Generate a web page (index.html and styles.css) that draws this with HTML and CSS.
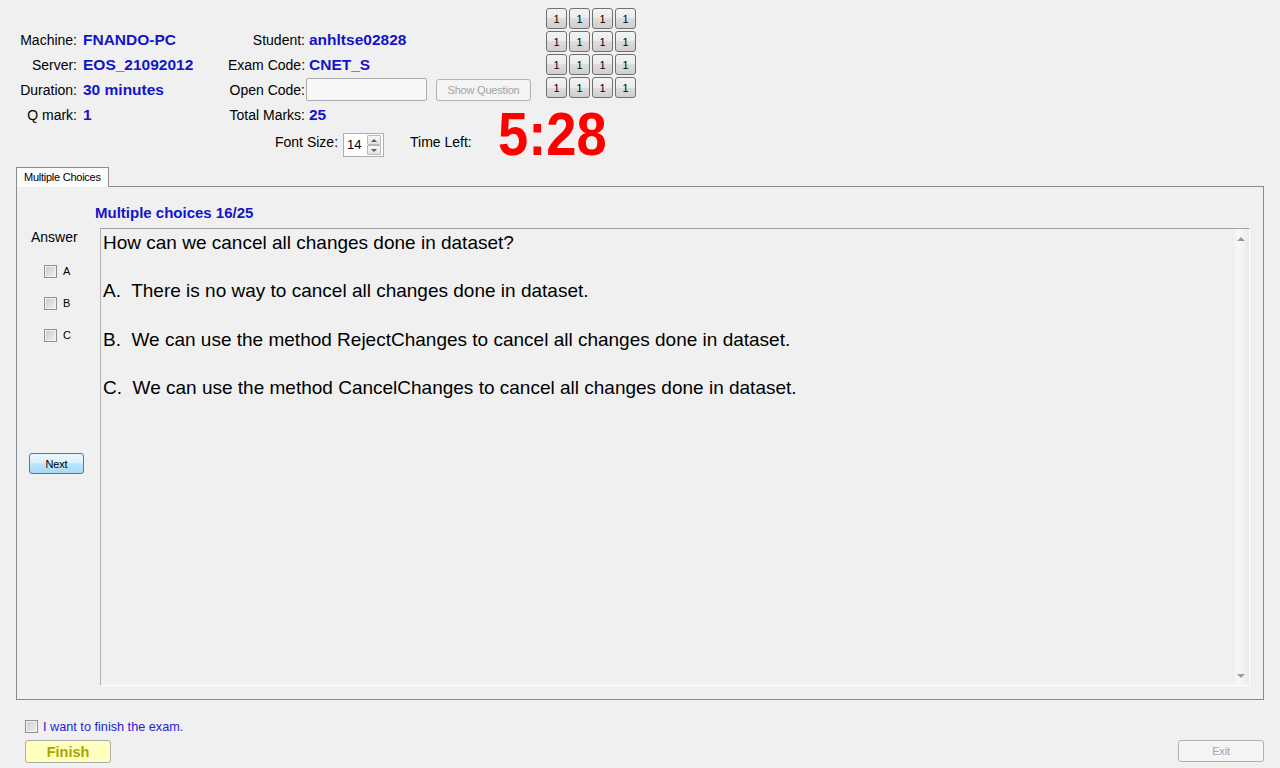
FILE: index.html
```html
<!DOCTYPE html>
<html>
<head>
<meta charset="utf-8">
<title>Exam</title>
<link rel="stylesheet" href="styles.css">
</head>
<body>
<div class="top">
  <div class="left">
    <div class="info">
      <span class="lbl">Machine:</span><span class="val">FNANDO-PC</span>
      <span class="lbl">Student:</span><span class="val v2">anhltse02828</span>
      <span class="lbl">Server:</span><span class="val">EOS_21092012</span>
      <span class="lbl">Exam Code:</span><span class="val v2">CNET_S</span>
      <span class="lbl">Duration:</span><span class="val">30 minutes</span>
      <span class="lbl">Open Code:</span>
      <span class="opencode"><span class="input"></span><span class="btn disabled showq">Show Question</span></span>
      <span class="lbl">Q mark:</span><span class="val">1</span>
      <span class="lbl">Total Marks:</span><span class="val v2">25</span>
    </div>
    <div class="fontrow">
      <span class="flbl">Font Size:</span>
      <span class="spin"><span class="num">14</span><span class="arrows"><span class="arr"><span class="tri-up"></span></span><span class="arr"><span class="tri-down"></span></span></span></span>
      <span class="tlbl">Time Left:</span>
      <span class="time">5:28</span>
    </div>
  </div>
  <div class="numgrid">
    <span class="nb">1</span><span class="nb">1</span><span class="nb">1</span><span class="nb">1</span>
    <span class="nb">1</span><span class="nb">1</span><span class="nb">1</span><span class="nb">1</span>
    <span class="nb">1</span><span class="nb">1</span><span class="nb">1</span><span class="nb">1</span>
    <span class="nb">1</span><span class="nb">1</span><span class="nb">1</span><span class="nb">1</span>
  </div>
</div>

<div class="tabs">
  <div class="tabhead">Multiple Choices</div>
  <div class="panel">
    <div class="ptitle">Multiple choices 16/25</div>
    <div class="pbody">
      <div class="answers">
        <div class="anslbl">Answer</div>
        <div class="opts">
          <div class="opt"><span class="cb"></span>A</div>
          <div class="opt"><span class="cb"></span>B</div>
          <div class="opt"><span class="cb"></span>C</div>
        </div>
        <div class="btn next">Next</div>
      </div>
      <div class="qbox">
        <div class="qtext">
          <p>How can we cancel all changes done in dataset?</p>
          <p>A.  There is no way to cancel all changes done in dataset.</p>
          <p>B.  We can use the method RejectChanges to cancel all changes done in dataset.</p>
          <p>C.  We can use the method CancelChanges to cancel all changes done in dataset.</p>
        </div>
        <div class="sbar"><span class="tri-up big"></span><span class="tri-down big"></span></div>
      </div>
    </div>
  </div>
</div>

<div class="footer">
  <div class="finishrow"><span class="cb"></span>I want to finish the exam.</div>
  <div class="btnrow">
    <div class="btn finish">Finish</div>
    <div class="btn disabled exit">Exit</div>
  </div>
</div>
</body>
</html>
```

FILE: styles.css
```css
body {
  margin: 0;
  width: 1280px;
  height: 768px;
  overflow: hidden;
  background: #f0f0f0;
  font-family: "Liberation Sans", Arial, sans-serif;
  color: #000;
}

.top {
  display: flex;
  height: 167px;
}

.left {
  width: 546px;
  flex: none;
}

.info {
  display: grid;
  grid-template-columns: 77px 151px 77px 1fr;
  grid-auto-rows: 25px;
  align-items: center;
  padding-top: 27px;
  font-size: 14px;
}

.lbl {
  text-align: right;
  white-space: nowrap;
}

.val {
  color: #1414c8;
  font-weight: bold;
  font-size: 15.5px;
  padding-left: 6px;
  white-space: nowrap;
}

.v2 {
  padding-left: 4px;
}

.opencode {
  display: flex;
  align-items: center;
}

.input {
  width: 121px;
  height: 23px;
  flex: none;
  box-sizing: border-box;
  margin-left: 1px;
  border: 1px solid #abadb3;
  border-radius: 2px;
  background: #f7f7f7;
}

.btn {
  box-sizing: border-box;
  display: flex;
  align-items: center;
  justify-content: center;
  flex: none;
  font-size: 11px;
  letter-spacing: -0.2px;
  border: 1px solid #707070;
  border-radius: 3px;
  white-space: nowrap;
}

.disabled {
  border-color: #adb2b5;
  background: #f4f4f4;
  color: #a3a3a3;
}

.showq {
  width: 95px;
  height: 22px;
  margin-left: 9px;
}

.fontrow {
  display: flex;
  align-items: flex-start;
  margin-top: 4px;
  padding-left: 275px;
  height: 24px;
  font-size: 14px;
}

.fontrow > * {
  flex: none;
}

.flbl,
.tlbl {
  line-height: 22px;
  white-space: nowrap;
}

.spin {
  width: 41px;
  height: 24px;
  box-sizing: border-box;
  margin: 2px 0 0 5px;
  border: 1px solid #abadb3;
  background: #fff;
  display: flex;
}

.spin .num {
  flex: 1;
  font-size: 13px;
  line-height: 22px;
  padding-left: 3px;
}

.arrows {
  width: 16px;
  display: flex;
  flex-direction: column;
  padding: 1px 2px 1px 0;
  box-sizing: border-box;
}

.arr {
  flex: 1;
  border: 1px solid #b8b8b8;
  border-radius: 1px;
  background: linear-gradient(#f7f7f7, #e2e2e2);
  display: flex;
  align-items: center;
  justify-content: center;
}

.tri-up {
  width: 0;
  height: 0;
  border-left: 3px solid transparent;
  border-right: 3px solid transparent;
  border-bottom: 3px solid #5a5a5a;
}

.tri-down {
  width: 0;
  height: 0;
  border-left: 3px solid transparent;
  border-right: 3px solid transparent;
  border-top: 3px solid #5a5a5a;
}

.tlbl {
  margin-left: 26px;
}

.time {
  margin: -8px 0 0 26px;
  font-size: 61px;
  font-weight: bold;
  line-height: 22px;
  color: #ff0000;
  transform: scaleX(0.89);
  transform-origin: left center;
}

.numgrid {
  display: grid;
  grid-template-columns: repeat(4, 21px);
  grid-auto-rows: 21px;
  gap: 2px;
  margin-top: 8px;
  align-self: flex-start;
}

.nb {
  box-sizing: border-box;
  border: 1px solid #707070;
  border-radius: 3px;
  background: linear-gradient(#f3f3f3 0%, #ebebeb 50%, #dddddd 50%, #cfcfcf 100%);
  font-size: 11px;
  display: flex;
  align-items: center;
  justify-content: center;
}

.tabs {
  margin: 0 16px;
}

.tabhead {
  position: relative;
  z-index: 1;
  width: 93px;
  height: 20px;
  margin-bottom: -1px;
  box-sizing: border-box;
  border: 1px solid #898c95;
  border-bottom: none;
  background: #fbfbfb;
  font-size: 11px;
  letter-spacing: -0.25px;
  line-height: 18px;
  padding-left: 7px;
  white-space: nowrap;
}

.panel {
  height: 514px;
  box-sizing: border-box;
  border: 1px solid #898c95;
  padding-top: 16px;
}

.ptitle {
  margin-left: 78px;
  font-size: 15px;
  font-weight: bold;
  color: #1414c8;
  line-height: 20px;
  height: 20px;
}

.pbody {
  display: flex;
  margin-top: 5px;
}

.answers {
  width: 83px;
  flex: none;
}

.anslbl {
  font-size: 14px;
  line-height: 18px;
  padding-left: 14px;
}

.opts {
  margin-top: 9px;
}

.opt {
  display: flex;
  align-items: center;
  height: 32px;
  padding-left: 27px;
  font-size: 11px;
}

.cb {
  width: 13px;
  height: 13px;
  flex: none;
  box-sizing: border-box;
  border: 1px solid #8e8f8f;
  background: linear-gradient(135deg, #cdcdcd, #efefef);
  box-shadow: inset 0 0 0 1px #f2f2f2;
}

.opt .cb {
  margin-right: 6px;
}

.next {
  width: 55px;
  height: 21px;
  margin: 102px 0 0 12px;
  border-color: #3c7fb1;
  background: linear-gradient(#eaf6fd 0%, #d9f0fc 50%, #bee6fd 50%, #a7d9f5 100%);
}

.qbox {
  width: 1150px;
  height: 458px;
  box-sizing: border-box;
  border-top: 1px solid #a0a0a0;
  border-left: 1px solid #b4b4b4;
  border-right: 1px solid #ffffff;
  border-bottom: 1px solid #ffffff;
  display: flex;
}

.qtext {
  flex: 1;
  padding: 2px 0 0 2px;
  font-size: 19px;
  line-height: 24.2px;
}

.qtext p {
  margin: 0 0 24.2px;
  white-space: pre;
}

.sbar {
  width: 17px;
  flex: none;
  display: flex;
  flex-direction: column;
  justify-content: space-between;
  align-items: center;
  padding: 8px 0 7px;
  box-sizing: border-box;
  background: linear-gradient(to right, #ededed, #f8f8f8 35%, #f3f3f3 65%, #eaeaea);
}

.tri-up.big {
  border-left-width: 4px;
  border-right-width: 4px;
  border-bottom: 4px solid #9a9a9a;
}

.tri-down.big {
  border-left-width: 4px;
  border-right-width: 4px;
  border-top: 4px solid #9a9a9a;
}

.footer {
  padding: 20px 16px 0 25px;
}

.finishrow {
  display: flex;
  align-items: center;
  height: 13px;
  font-size: 12.7px;
  color: #2424d0;
  white-space: nowrap;
}

.finishrow .cb {
  margin-right: 5px;
}

.btnrow {
  display: flex;
  justify-content: space-between;
  align-items: flex-start;
  margin-top: 7px;
}

.finish {
  width: 86px;
  height: 23px;
  background: #ffffc0;
  border-color: #acacac;
  color: #a8a400;
  font-weight: bold;
  font-size: 14.5px;
  letter-spacing: 0;
}

.exit {
  width: 86px;
  height: 22px;
}
```
